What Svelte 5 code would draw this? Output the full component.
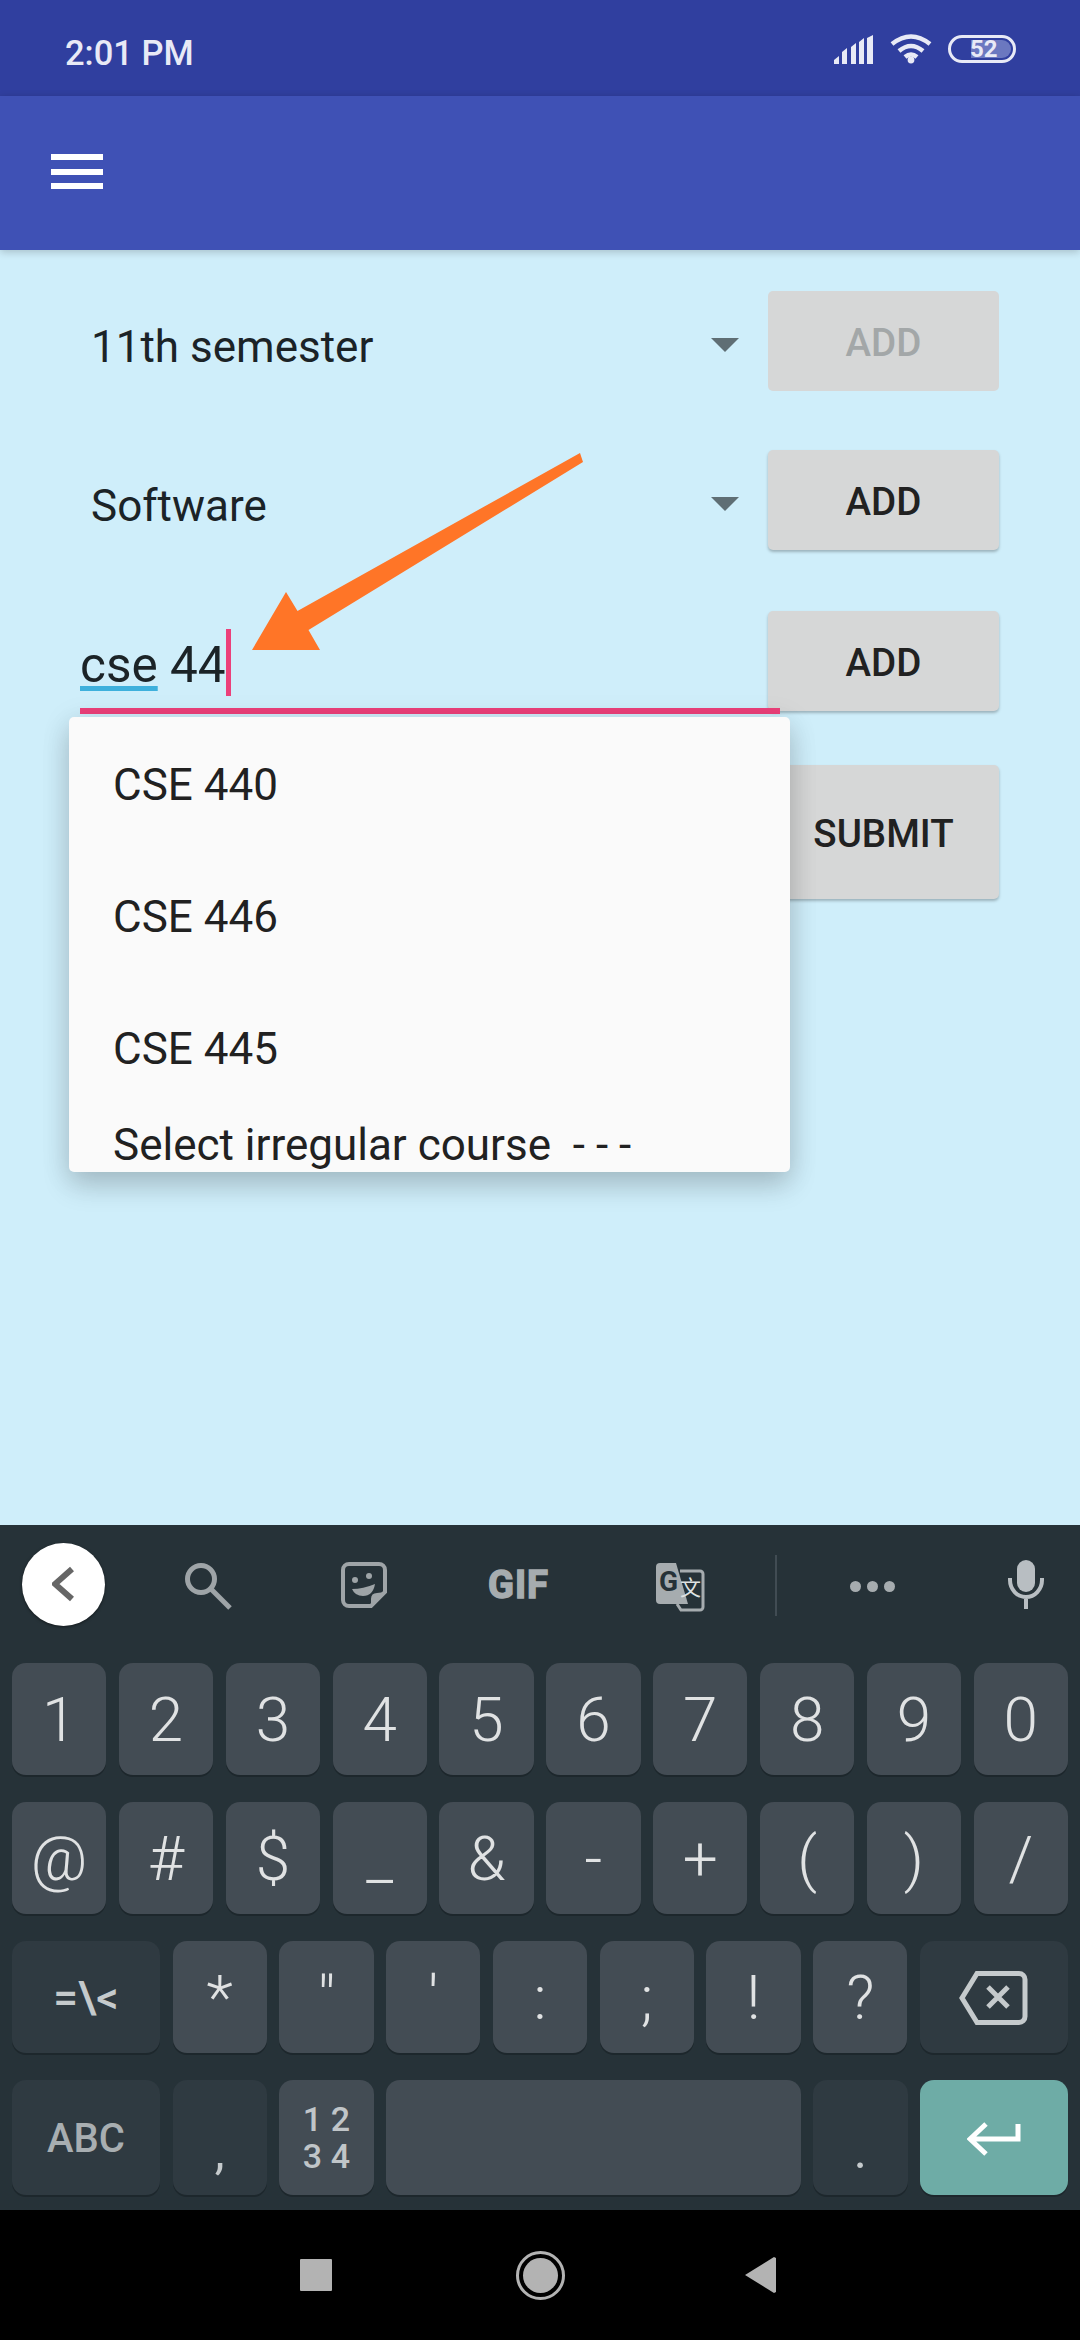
<script lang="ts">
  const courses = ['CSE 440', 'CSE 446', 'CSE 445']

  const digits = ['1', '2', '3', '4', '5', '6', '7', '8', '9', '0']
  const symbols = ['@', '#', '$', '_', '&', '-', '+', '(', ')', '/']
  const punctuation = ['*', '"', "'", ':', ';', '!', '?']
</script>

<div class="phone">
  <header class="status-bar">
    <span class="time">2:01 PM</span>
    <div class="status-icons">
      <svg class="signal" width="39" height="29" viewBox="0 0 39 29" fill="currentColor">
        <path d="M0 29v-4l5-4v8zM8 29V17l5-4v16zM17 29V12l5-4v21zM25 29V7l5-4v26zM33 29V3l6-3v29z" />
      </svg>
      <svg class="wifi" width="42" height="30" viewBox="0 0 42 30" fill="none" stroke="currentColor" stroke-width="4.5">
        <path d="M2 10Q21-5 40 10" />
        <path d="M9 17Q21 7 33 17" />
        <path d="M15 23Q21 18 27 23" />
        <circle cx="21" cy="26" r="3.4" fill="currentColor" stroke="none" />
      </svg>
      <div class="battery">
        <div class="battery-fill"></div>
        <span>52</span>
      </div>
    </div>
  </header>

  <div class="app-bar">
    <div class="menu"><i></i><i></i><i></i></div>
  </div>

  <main class="content">
    <div class="row">
      <div class="select">
        <span>11th semester</span>
        <div class="caret"></div>
      </div>
      <button class="btn" disabled>ADD</button>
    </div>

    <div class="row">
      <div class="select">
        <span>Software</span>
        <div class="caret"></div>
      </div>
      <button class="btn">ADD</button>
    </div>

    <div class="row field-row">
      <div class="field">
        <span class="typed"><span class="word">cse</span> 44<i class="cursor"></i></span>
      </div>
      <button class="btn">ADD</button>
    </div>

    <div class="row submit-row">
      <button class="btn submit">SUBMIT</button>
    </div>

    <div class="popup">
      {#each courses as course}
        <div class="option">{course}</div>
      {/each}
      <div class="option short">Select irregular course&nbsp; - - -</div>
    </div>

    <svg class="arrow" width="340" height="200" viewBox="0 0 340 200">
      <path fill="#ff7527" d="M330 0L333 9L58.500 177L70 197H2L36 139L47.500 158Z" />
    </svg>
  </main>

  <section class="keyboard">
    <div class="toolbar">
      <div class="back">
        <svg width="24" height="36" viewBox="0 0 24 36" fill="none" stroke="#666" stroke-width="6">
          <path d="M20 3L3 18L20 33" />
        </svg>
      </div>
      <svg class="search" width="47" height="47" viewBox="0 0 47 47" fill="none" stroke="#9ea4a7" stroke-width="5">
        <circle cx="16" cy="16" r="13.500" />
        <path d="M26 26L45 45" />
      </svg>
      <svg class="sticker" width="46" height="46" viewBox="0 0 46 46" fill="none" stroke="#9ea4a7" stroke-width="4">
        <path d="M8 2H38a6 6 0 0 1 6 6V30L30 44H8a6 6 0 0 1-6-6V8a6 6 0 0 1 6-6z" />
        <path fill="#9ea4a7" stroke="none" d="M44 30L30 44V37q0-6 6-6zM11 27Q22 27 34 22Q32 34 22 34Q14 34 11 27z" />
        <circle fill="#9ea4a7" stroke="none" cx="14" cy="18" r="3" />
        <circle fill="#9ea4a7" stroke="none" cx="28" cy="14" r="3" />
      </svg>
      <span class="gif">GIF</span>
      <svg class="translate" width="49" height="49" viewBox="0 0 49 49">
        <path fill="none" stroke="#a6acaf" stroke-width="3" d="M24 8H44a3 3 0 0 1 3 3V44a3 3 0 0 1-3 3H25L21 41" />
        <path fill="#a6acaf" d="M4 0H20L32 41H4a4 4 0 0 1-4-4V4a4 4 0 0 1 4-4z" />
        <text x="3" y="28" class="translate-g">G</text>
        <text x="24" y="32" class="translate-a">文</text>
      </svg>
      <div class="divider"></div>
      <div class="dots"><i></i><i></i><i></i></div>
      <svg class="mic" width="36" height="49" viewBox="0 0 36 49" fill="none" stroke="#b8bec2" stroke-width="4">
        <rect x="9" y="0" width="18" height="32" rx="9" fill="#b8bec2" stroke="none" />
        <path d="M2 18V20A16 17 0 0 0 34 20V18M18 37V49" />
      </svg>
    </div>

    <div class="keys ten">
      {#each digits as key}
        <div class="key">{key}</div>
      {/each}
    </div>

    <div class="keys ten">
      {#each symbols as key}
        <div class="key">{key}</div>
      {/each}
    </div>

    <div class="keys nine">
      <div class="key dark small-label">=\&lt;</div>
      {#each punctuation as key}
        <div class="key">{key}</div>
      {/each}
      <div class="key dark">
        <svg width="69" height="54" viewBox="0 0 69 54" fill="none" stroke="#c5cacc" stroke-width="5">
          <path d="M18 2.500H60a6 6 0 0 1 6 6V45.500a6 6 0 0 1-6 6H18L3 27z" />
          <path d="M29 16L49 36M49 16L29 36" />
        </svg>
      </div>
    </div>

    <div class="keys nine last">
      <div class="key dark abc">ABC</div>
      <div class="key dark tiny">,</div>
      <div class="key grid-key"><span>1 2</span><span>3 4</span></div>
      <div class="key space"></div>
      <div class="key dark tiny">.</div>
      <div class="key enter">
        <svg width="54" height="34" viewBox="0 0 54 34" fill="none" stroke="#fff" stroke-width="5">
          <path d="M51 2V17H4M19 2L3 17L19 32" />
        </svg>
      </div>
    </div>
  </section>

  <nav class="nav">
    <div class="nav-square"></div>
    <svg class="nav-home" width="49" height="49" viewBox="0 0 49 49">
      <circle cx="24.500" cy="24.500" r="23" fill="none" stroke="#b3b3b3" stroke-width="3" />
      <circle cx="24.500" cy="24.500" r="17.500" fill="#b3b3b3" />
    </svg>
    <svg class="nav-back" width="31" height="36" viewBox="0 0 31 36">
      <path fill="#b3b3b3" d="M31 1V35L29 36L0 18L29 0Z" />
    </svg>
  </nav>
</div>

<style>
  :global(body) {
    margin: 0;
  }

  .phone {
    width: 1080px;
    height: 2340px;
    display: flex;
    flex-direction: column;
    overflow: hidden;
    font-family: Roboto, 'Liberation Sans', sans-serif;
    background: #cfeefa;
  }

  .status-bar {
    height: 96px;
    flex: none;
    display: flex;
    align-items: center;
    padding: 10px 64px 0 65px;
    box-sizing: border-box;
    background: #303f9f;
    color: #e8eaf6;
  }

  .time {
    font-size: 34.500px;
    font-weight: 500;
  }

  .status-icons {
    margin-left: auto;
    margin-top: -8px;
    display: flex;
    align-items: center;
    color: #e8eaf6;
  }

  .wifi {
    margin-left: 17px;
  }

  .battery {
    margin-left: 16px;
    width: 68px;
    height: 28px;
    box-sizing: border-box;
    border: 3.5px solid #e8eaf6;
    border-radius: 14px;
    position: relative;
    display: flex;
    align-items: center;
    font-size: 24px;
    font-weight: 700;
    padding-left: 19px;
  }

  .battery span {
    position: relative;
  }

  .battery-fill {
    position: absolute;
    left: 20px;
    top: 2px;
    bottom: 2px;
    right: 2px;
    background: #6b78c0;
    border-radius: 0 10px 10px 0;
  }

  .app-bar {
    height: 154px;
    flex: none;
    display: flex;
    align-items: center;
    padding-left: 51px;
    background: #3f51b5;
    box-shadow: 0 2px 8px rgba(0, 0, 0, 0.2);
    position: relative;
    z-index: 2;
  }

  .menu {
    display: flex;
    flex-direction: column;
    gap: 8.5px;
    width: 52px;
    margin-top: -3px;
  }

  .menu i {
    height: 6px;
    background: #fff;
  }

  .content {
    height: 1275px;
    flex: none;
    box-sizing: border-box;
    position: relative;
    padding: 41px 81px 0 91px;
    display: flex;
    flex-direction: column;
    gap: 59px;
    color: #1b2327;
  }

  .row {
    display: flex;
    align-items: flex-start;
    justify-content: flex-end;
  }

  .field-row {
    margin-top: 2px;
  }

  .select {
    flex: 1;
    display: flex;
    align-items: center;
    height: 100px;
    padding: 12px 29px 0 0;
    box-sizing: border-box;
    font-size: 44px;
  }

  .caret {
    margin-left: auto;
    margin-top: -4px;
    width: 0;
    height: 0;
    border-left: 14px solid transparent;
    border-right: 14px solid transparent;
    border-top: 14px solid #5f6e74;
  }

  .btn {
    width: 231px;
    height: 100px;
    flex: none;
    border: 0;
    padding: 2px 0 0;
    border-radius: 5px;
    background: #d6d7d7;
    color: #212121;
    font-family: inherit;
    font-size: 38.500px;
    font-weight: 500;
    box-shadow: 0 2px 3px rgba(0, 0, 0, 0.25);
  }

  .btn:disabled {
    color: #a3a7a8;
    box-shadow: none;
  }

  .field {
    width: 700px;
    height: 103px;
    margin-left: -11px;
    margin-right: -12px;
    box-sizing: border-box;
    border-bottom: 6px solid #ec407a;
    padding-top: 25px;
    font-size: 49.500px;
    position: relative;
    z-index: 1;
  }

  .typed {
    position: relative;
  }

  .word {
    text-decoration: underline;
    text-decoration-color: #3eb0dc;
    text-decoration-thickness: 5px;
    text-underline-offset: 4px;
  }

  .cursor {
    position: absolute;
    right: -5px;
    top: -7px;
    width: 5px;
    height: 67px;
    background: #ec407a;
  }

  .submit {
    height: 134px;
    margin-top: -8px;
  }

  .popup {
    position: absolute;
    left: 69px;
    top: 467px;
    width: 721px;
    height: 455px;
    overflow: hidden;
    background: #fafafa;
    border-radius: 5px;
    color: #212121;
    font-size: 44px;
    box-shadow:
      0 14px 28px rgba(0, 0, 0, 0.16),
      0 4px 30px rgba(0, 0, 0, 0.1);
    z-index: 3;
  }

  .option {
    height: 132px;
    display: flex;
    align-items: center;
    padding: 3px 0 0 44px;
    box-sizing: border-box;
  }

  .option.short {
    height: 58px;
    padding-top: 5px;
  }

  .arrow {
    position: absolute;
    left: 250px;
    top: 203px;
    z-index: 4;
  }

  .keyboard {
    height: 685px;
    flex: none;
    background: #263238;
    box-sizing: border-box;
  }

  .toolbar {
    height: 138px;
    display: flex;
    align-items: center;
    padding-left: 22px;
    box-sizing: border-box;
  }

  .back {
    width: 83px;
    height: 83px;
    flex: none;
    border-radius: 50%;
    background: #fff;
    box-shadow: 0 1px 3px rgba(0, 0, 0, 0.5);
    display: flex;
    align-items: center;
    justify-content: center;
    margin-top: -20px;
  }

  .search {
    margin-left: 80px;
    margin-top: -15px;
  }

  .sticker {
    margin-left: 109px;
    margin-top: -18px;
  }

  .gif {
    margin-left: 101px;
    margin-top: -19px;
    width: 64px;
    font-size: 38px;
    font-weight: 700;
    letter-spacing: 1px;
    -webkit-text-stroke: 1.5px #a6acaf;
    color: #a6acaf;
    line-height: 1;
  }

  .translate {
    margin-left: 104px;
    margin-top: -14px;
  }

  .translate-g {
    font-size: 28px;
    font-weight: 700;
    fill: #263238;
  }

  .translate-a {
    font-family: 'Noto Sans CJK SC', sans-serif;
    font-size: 21px;
    fill: #dfe2e3;
  }

  .divider {
    margin-left: 70px;
    margin-top: -17px;
    width: 2px;
    height: 61px;
    background: #414c53;
  }

  .dots {
    margin-left: 73px;
    margin-top: -16px;
    display: flex;
    gap: 6px;
  }

  .dots i {
    width: 11px;
    height: 11px;
    border-radius: 50%;
    background: #a6acaf;
  }

  .mic {
    margin-left: 113px;
    margin-top: -19px;
  }

  .keys {
    display: grid;
    padding: 0 12px;
    gap: 12.500px;
    margin-bottom: 27px;
  }

  .ten {
    grid-template-columns: repeat(10, 1fr);
  }

  .nine {
    grid-template-columns: 148px repeat(7, 1fr) 148px;
  }

  .key {
    height: 112px;
    padding-top: 2px;
    box-sizing: border-box;
    border-radius: 14px;
    background: #434c54;
    box-shadow: 0 2px 0 #1d272c;
    color: #e0e2e3;
    font-size: 62px;
    font-weight: 300;
    line-height: 1;
    text-align: center;
    display: flex;
    align-items: center;
    justify-content: center;
  }

  .key.dark {
    background: #2f3a41;
  }

  .small-label {
    font-size: 44px;
    font-weight: 500;
    color: #c5cacc;
  }

  .last .key {
    height: 115px;
  }

  .abc {
    font-size: 40px;
    font-weight: 500;
    color: #a8aeb1;
  }

  .last .tiny {
    font-size: 50px;
    font-weight: 400;
    color: #c5cacc;
    padding-top: 26px;
  }

  .last .grid-key {
    flex-direction: column;
    font-size: 34px;
    font-weight: 500;
    line-height: 37px;
    color: #c0c5c8;
    padding-top: 0;
  }

  .space {
    grid-column: span 4;
  }

  .key.enter {
    background: #6eaca6;
  }

  .nav {
    height: 130px;
    flex: none;
    background: #000;
    display: flex;
    align-items: center;
    padding-left: 300px;
  }

  .nav-square {
    width: 32px;
    height: 32px;
    background: #b3b3b3;
    border-radius: 1px;
  }

  .nav-home {
    margin-left: 184px;
  }

  .nav-back {
    margin-left: 180px;
  }
</style>
